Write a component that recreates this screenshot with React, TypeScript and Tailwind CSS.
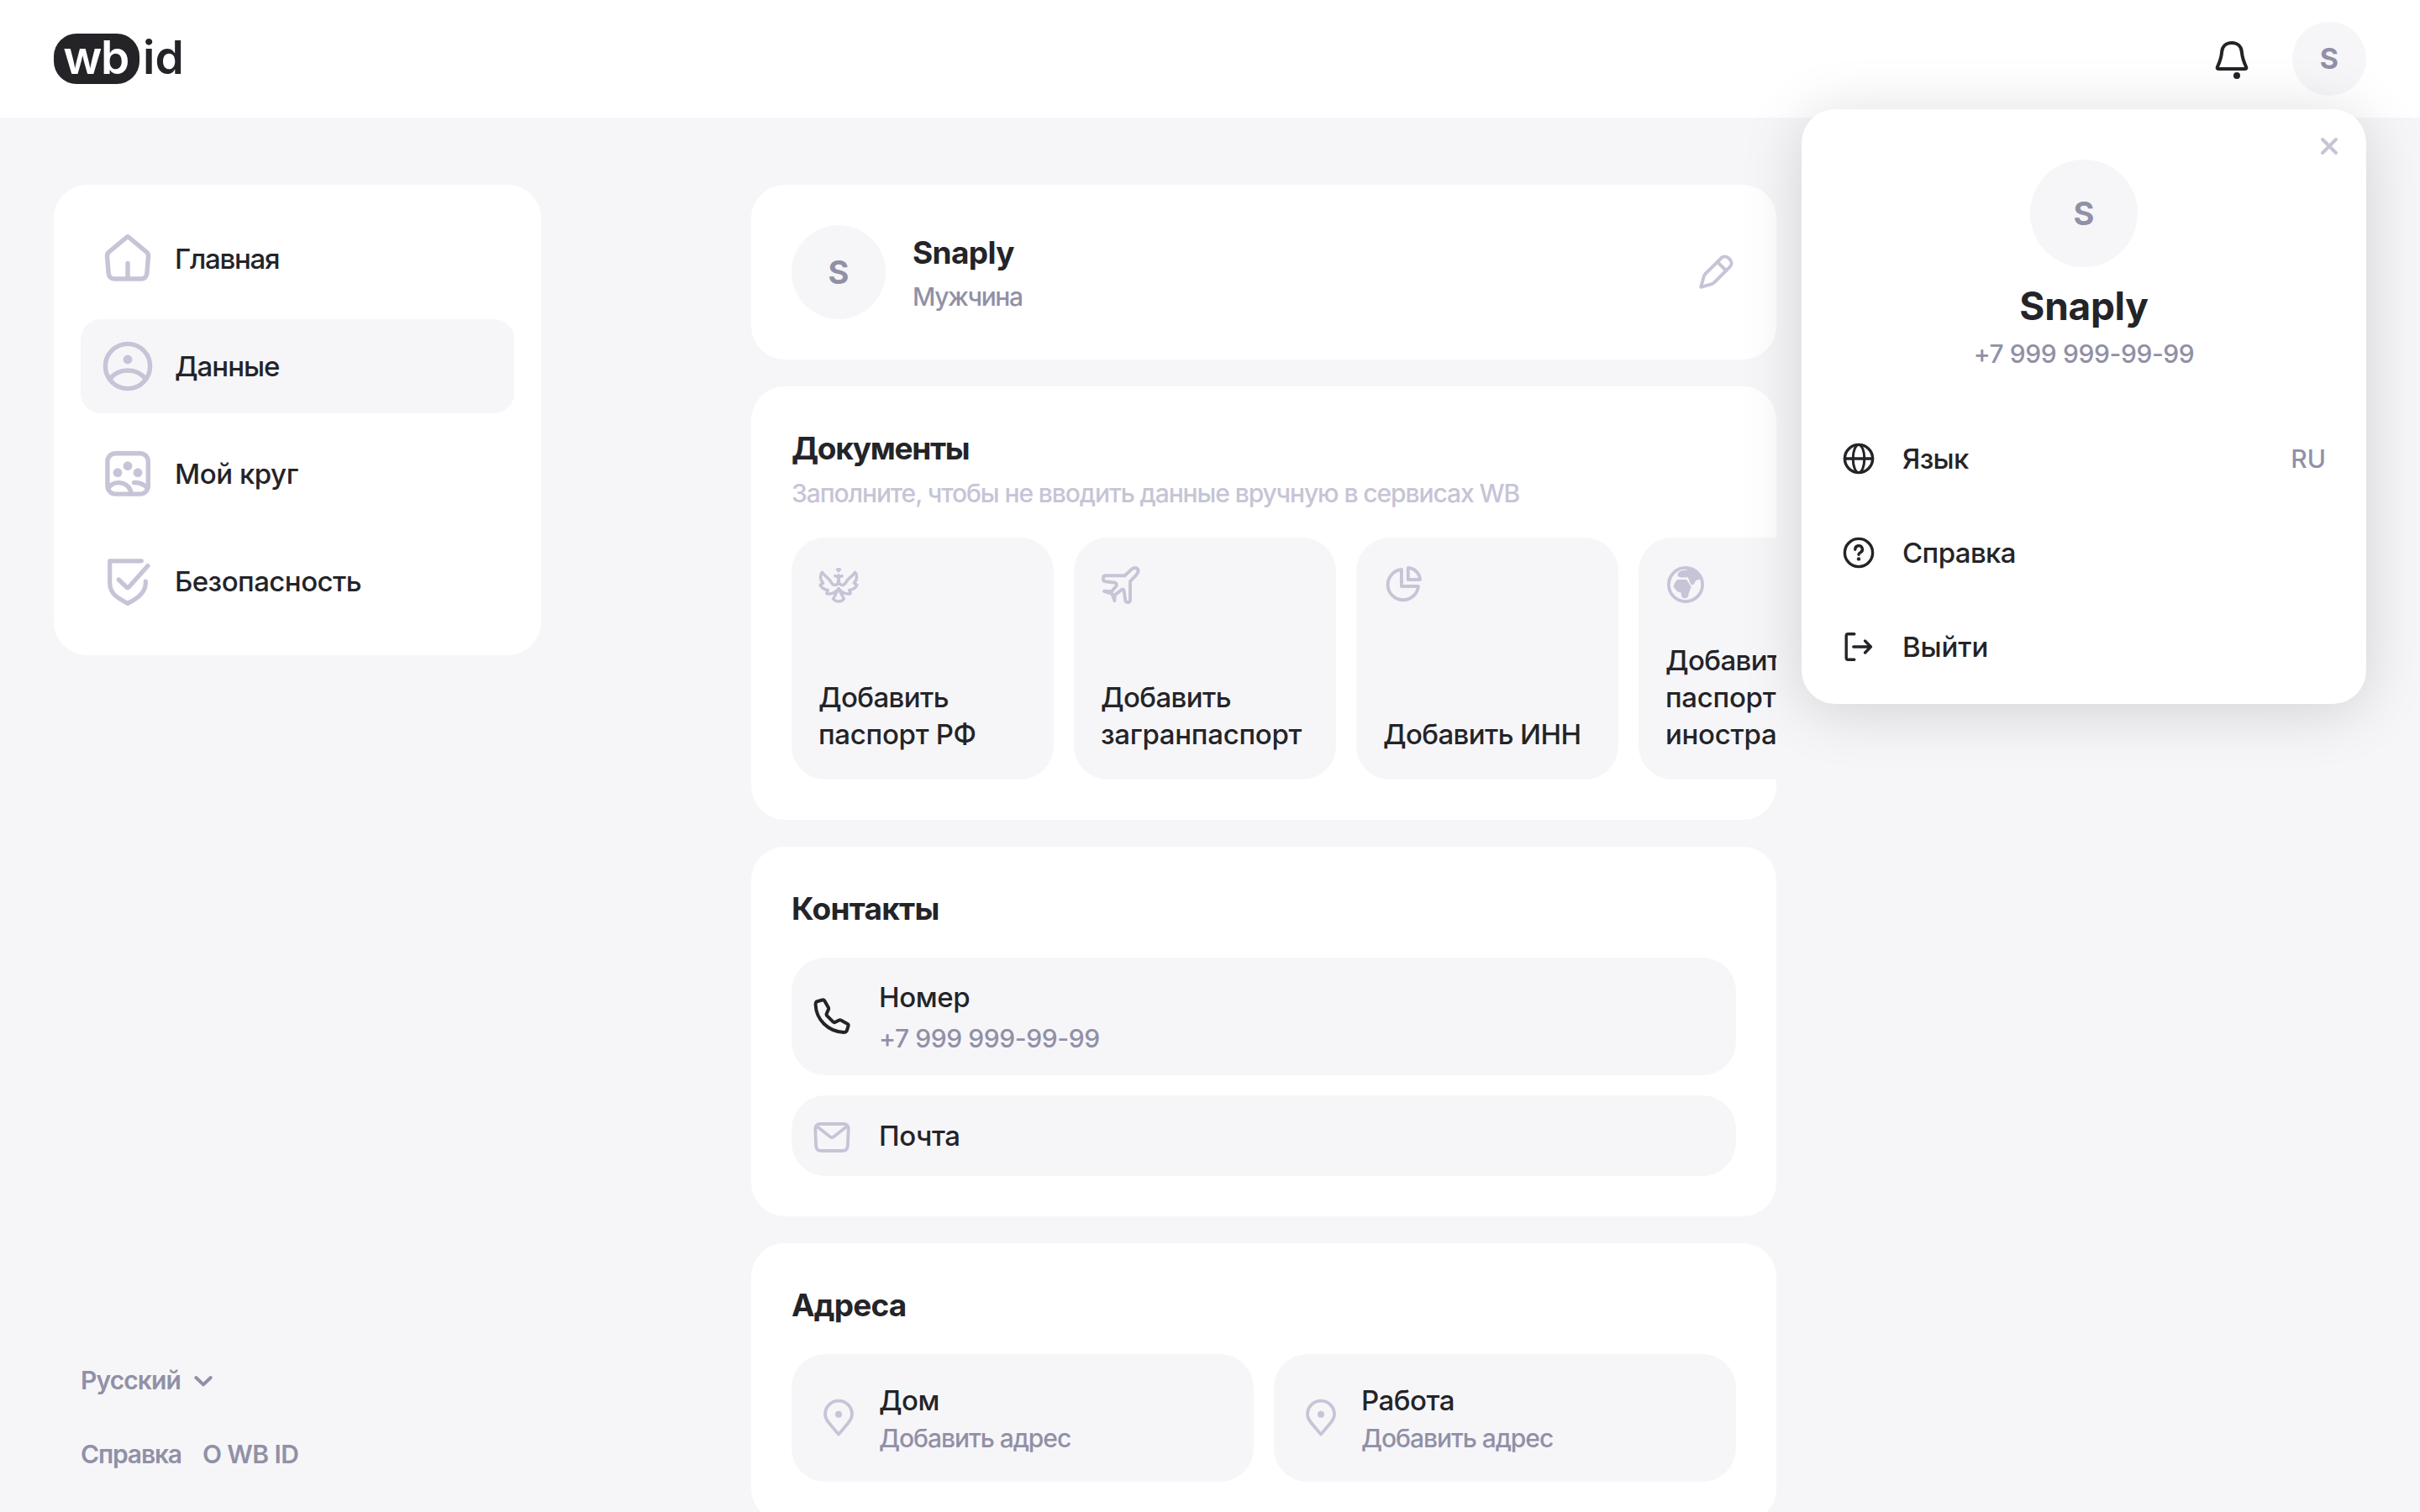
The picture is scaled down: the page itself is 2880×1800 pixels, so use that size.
import type { ReactNode } from 'react'
import clsx from 'clsx'

const PHONE = '+7 999 999-99-99'

interface IconProps {
  className?: string
}

function Icon({ box, width, className, children }: { box: number; width: number; className?: string; children: ReactNode }) {
  return (
    <svg
      viewBox={`0 0 ${box} ${box}`}
      fill="none"
      stroke="currentColor"
      strokeWidth={width}
      strokeLinecap="round"
      strokeLinejoin="round"
      className={clsx('shrink-0', className)}
    >
      {children}
    </svg>
  )
}

const Dot = ({ x, y, r }: { x: number; y: number; r: number }) => <circle cx={x} cy={y} r={r} fill="currentColor" stroke="none" />

const HomeIcon = ({ className }: IconProps) => (
  <Icon box={64} width={5.4} className={className}>
    <path d="M30.4 6.7Q32 5.2 33.6 6.7L54.6 24.3Q56.7 26.2 56.5 29L54.9 49Q54.2 56 47.5 56H16.5Q9.8 56 9.1 49L7.5 29Q7.3 26.2 9.4 24.3Z" />
    <path d="M32 37.4V55" />
  </Icon>
)

const UserIcon = ({ className }: IconProps) => (
  <Icon box={64} width={5.4} className={className}>
    <circle cx="32" cy="32" r="26.6" />
    <path d="M10.5 47.5C15.5 41 23.5 37 32 37S48.5 41 53.5 47.5" />
    <Dot x={32} y={24} r={5.4} />
  </Icon>
)

const CircleIcon = ({ className }: IconProps) => (
  <Icon box={64} width={5.4} className={className}>
    <rect x="7.9" y="7.7" width="48.4" height="48.4" rx="9.5" />
    <path d="M8.8 49C12 44.8 16.2 42.6 21 42.6C29 42.6 35.7 48.2 36.2 56" />
    <path d="M39.6 42.6C46 42.2 51.2 44.6 55.6 49" />
    <Dot x={32} y={22.7} r={5.4} />
    <Dot x={20} y={30.7} r={5.4} />
    <Dot x={44} y={30.7} r={5.4} />
  </Icon>
)

const ShieldIcon = ({ className }: IconProps) => (
  <Icon box={64} width={5.2} className={className}>
    <path d="M48.3 7.8H10.7V34C10.7 47 20 52 32 58.4C44 52 53.3 45.5 53.3 34V32" />
    <path d="M21.2 30L31 39.4Q32 40.2 33 39.2L56 13.6" />
  </Icon>
)

const BellIcon = ({ className }: IconProps) => (
  <Icon box={48} width={4} className={className}>
    <path d="M24 5C17 5 12.6 9.5 12.1 16C11.6 23 10 27 6.8 34Q6.2 36 8 36H40Q41.8 36 41.2 34C38 27 36.4 23 35.9 16C35.4 9.5 31 5 24 5Z" />
    <Dot x={30} y={44} r={4} />
  </Icon>
)

const PencilIcon = ({ className }: IconProps) => (
  <Icon box={48} width={3.9} className={className}>
    <path d="M6.2 41.8L9.8 29Q10.3 27.3 11.5 26L30.7 7C33.2 4.6 37 5 40 8S43.4 14.8 41 17.3L22 36.3Q20.8 37.6 19 38.2Z" />
    <path d="M26 12L36 22" />
  </Icon>
)

const EagleIcon = ({ className }: IconProps) => (
  <Icon box={48} width={3.5} className={className}>
    <path d="M24 12.8V18C24 22 22.5 24.5 19.5 24.5C16 24.5 15.6 22 14.5 20C12 16 7 13.5 4.5 9.3C1.6 12.5 1.6 18 5.6 22L2.2 24.5C4 28.4 7.5 30 11.2 30.4L9.8 34.5C15 36 21 33.5 24 28.8" />
    <path d="M24 18C24 22 25.5 24.5 28.5 24.5C32 24.5 32.4 22 33.5 20C36 16 41 13.5 43.5 9.3C46.4 12.5 46.4 18 42.4 22L45.8 24.5C44 28.4 40.5 30 36.8 30.4L38.2 34.5C33 36 27 33.5 24 28.8" />
    <path d="M24 28.8L17.6 41C20.6 45 27.4 45 30.4 41Z" />
    <path d="M19.8 13.6L24 15.2L28.2 13.6" />
    <path d="M24 8.2L22 6Q23 4.8 24 5.8Q25 4.8 26 6Z" strokeWidth="2.6" />
  </Icon>
)

const PlaneIcon = ({ className }: IconProps) => (
  <Icon box={48} width={3.9} className={className}>
    <path d="M28.6 13.2L37 5.4C41 2.3 45.8 4.6 44.2 9.4C43 12.6 38.4 16.4 35 20V42.4Q34.8 45 32.2 45Q29.4 45 29.1 42L27.6 31Q26.8 28.6 24.6 30.2L16.8 36.4L16.4 43.2L13.6 35L4 31.8L12.8 32.2L18.6 25.4Q19.6 22 16 21.5L5.4 20.2Q3 19.8 3 17.4V15.8Q3 13.2 5.8 13.2Z" />
  </Icon>
)

const PieIcon = ({ className }: IconProps) => (
  <Icon box={48} width={3.9} className={className}>
    <path d="M21.9 6A18.2 18.2 0 1 0 41.9 26H21.9Z" />
    <path d="M29.8 4A15 15 0 0 1 44 18H29.8Z" />
  </Icon>
)

const EarthIcon = ({ className }: IconProps) => (
  <Icon box={48} width={3.8} className={className}>
    <circle cx="24" cy="24" r="20.1" />
    <path
      d="M25 4L26 6.6C22 7 17 7.5 15.6 9.6Q13.4 12.4 15.6 14.4Q17 15.6 20 15.5L26.6 15.3C28.6 18 28.6 22.5 31 24Q34 25 35.6 20Q38 17 43.4 17.5A20 20 0 0 0 25 4Z"
      fill="currentColor"
      stroke="none"
    />
    <path
      d="M14 18H25Q26.4 20 28 22.4Q30 25 30.8 27C28.6 30.5 28.2 34 27 38Q25.6 40.6 22.6 40.2Q18.8 39.6 18.8 36V33.4Q15.4 33.6 13.6 31.6L9.4 26.6Q10.4 21.6 14 18Z"
      fill="currentColor"
      stroke="none"
    />
  </Icon>
)

const PhoneIcon = ({ className }: IconProps) => (
  <Icon box={48} width={4} className={className}>
    <path d="M12.6 4.5L6.4 6.2C4.8 6.8 4.6 8 4.6 10C5.2 28 20 42.4 38 42.9C40.2 42.9 41.3 42.5 41.9 40.6L43.7 34.9Q44 33.7 42.7 32.9L34.7 28.6Q33.6 28 32.5 28.6L27.6 31Q26.5 31.4 25.6 30.6L17.9 22.9Q17.2 22 17.6 21L20 15.6Q20.4 14.5 19.9 13.5L15.3 5.4Q14.3 4 12.6 4.5Z" />
  </Icon>
)

const MailIcon = ({ className }: IconProps) => (
  <Icon box={48} width={3.8} className={className}>
    <path d="M10.4 10H37.6Q43.8 10 43.7 16.2L42.9 35.8Q42.5 42 36.6 42H11.4Q5.5 42 5.1 35.8L4.3 16.2Q4.2 10 10.4 10Z" />
    <path d="M5.6 12.6L22.2 25.4Q24 26.8 25.8 25.4L42.4 12.6" />
  </Icon>
)

const PinIcon = ({ className }: IconProps) => (
  <Icon box={48} width={3.8} className={className}>
    <path d="M24 43.6L13.4 31C10 27 8 24 8 19.7A16 16 0 0 1 40 19.7C40 24 38 27 34.6 31Z" />
    <Dot x={24} y={19.8} r={4} />
  </Icon>
)

const GlobeIcon = ({ className }: IconProps) => (
  <Icon box={40} width={3.4} className={className}>
    <circle cx="20" cy="20" r="16.6" />
    <ellipse cx="20" cy="20" rx="6.8" ry="16.6" strokeWidth="3" />
    <path d="M3.4 20H36.6" />
  </Icon>
)

const HelpIcon = ({ className }: IconProps) => (
  <Icon box={40} width={3.4} className={className}>
    <circle cx="20" cy="20" r="16.6" />
    <path d="M15.8 16.2A4.3 4.3 0 1 1 22 19.8Q20 20.8 20 22.2" />
    <Dot x={20} y={27.4} r={2.2} />
  </Icon>
)

const ExitIcon = ({ className }: IconProps) => (
  <Icon box={40} width={3.4} className={className}>
    <path d="M14.8 4.8H7.2Q5.2 4.8 5.2 6.8V33.2Q5.2 35.2 7.2 35.2H14.8" />
    <path d="M13.8 20H34M27.6 13L34.4 20L27.6 27" />
  </Icon>
)

function Avatar({ className }: IconProps) {
  return (
    <div className={clsx('flex shrink-0 items-center justify-center rounded-full bg-[#f6f6f9] font-bold text-[#9190a6]', className)}>
      S
    </div>
  )
}

function Card({ title, tracking, children }: { title: string; tracking: string; children: ReactNode }) {
  return (
    <section className="shrink-0 overflow-hidden rounded-[40px] bg-white p-12">
      <h2 className={clsx('text-[37px] leading-[52px] font-bold', tracking)}>{title}</h2>
      {children}
    </section>
  )
}

const navItems = [
  { label: 'Главная', icon: HomeIcon, tracking: 'tracking-[-1.25px]' },
  { label: 'Данные', icon: UserIcon, active: true, tracking: 'tracking-[-1px]' },
  { label: 'Мой круг', icon: CircleIcon, tracking: 'tracking-[-0.45px]' },
  { label: 'Безопасность', icon: ShieldIcon, tracking: 'tracking-[-0.55px]' },
]

const documents = [
  { label: ['Добавить', 'паспорт РФ'], icon: EagleIcon },
  { label: ['Добавить', 'загранпаспорт'], icon: PlaneIcon },
  { label: ['Добавить ИНН'], icon: PieIcon },
  { label: ['Добавить', 'паспорт', 'иностранца'], icon: EarthIcon },
]

const menuItems = [
  { label: 'Язык', icon: GlobeIcon, value: 'RU', tracking: 'tracking-[-0.7px]' },
  { label: 'Справка', icon: HelpIcon, tracking: 'tracking-[-0.6px]' },
  { label: 'Выйти', icon: ExitIcon, tracking: 'tracking-[-0.1px]' },
]

function Header() {
  return (
    <header className="flex h-[140px] shrink-0 items-center justify-between bg-white px-16">
      <div className="flex items-center text-[55px] leading-[60px] font-semibold">
        <div className="flex h-[60px] w-[102px] items-center justify-center rounded-[27px] bg-[#242428] pr-0.5 pb-[5px] tracking-[-1.6px] text-white">
          wb
        </div>
        <span className="pb-[5px] pl-1 tracking-[0.2px]">id</span>
      </div>
      <div className="flex items-center gap-12">
        <BellIcon className="size-12" />
        <Avatar className="size-22 text-[34px]" />
      </div>
    </header>
  )
}

function Sidebar() {
  return (
    <aside className="flex w-[580px] shrink-0 flex-col justify-between">
      <nav className="flex flex-col gap-4 rounded-[40px] bg-white p-8">
        {navItems.map(({ label, icon: ItemIcon, active, tracking }) => (
          <a key={label} className={clsx('flex h-28 items-center gap-6 rounded-3xl px-6', active && 'bg-[#f6f6f9]')}>
            <ItemIcon className="size-16 text-[#c6c4d6]" />
            <span className={tracking}>{label}</span>
          </a>
        ))}
      </nav>
      <footer className="flex flex-col gap-12 px-8 pb-[49px] text-[30px] leading-10 font-semibold text-[#9190a6]">
        <div className="flex items-center gap-[11px]">
          <span className="tracking-[-0.9px]">Русский</span>
          <Icon box={32} width={4} className="size-8">
            <path d="M7.3 13L16 21.4L24.7 13" />
          </Icon>
        </div>
        <div className="flex gap-[25px]">
          <span className="tracking-[-1.15px]">Справка</span>
          <span className="tracking-[-0.6px]">О WB ID</span>
        </div>
      </footer>
    </aside>
  )
}

function ProfileMenu() {
  return (
    <div className="absolute top-[130px] right-16 flex h-[708px] w-[672px] flex-col rounded-[40px] bg-white px-12 pt-[60px] shadow-[0_8px_72px_rgba(0,0,0,0.15)]">
      <Icon box={32} width={4} className="absolute top-7 right-7 size-8 text-[#c6c4d6]">
        <path d="M8 8L24 24M24 8L8 24" />
      </Icon>
      <div className="flex flex-col items-center">
        <Avatar className="size-32 text-[38px]" />
        <h1 className="mt-4 text-[46px] leading-[60px] font-bold tracking-[-0.3px]">Snaply</h1>
        <p className="mt-[7px] text-[30px] leading-10 tracking-[-0.4px] text-[#9190a6]">{PHONE}</p>
      </div>
      <ul className="mt-[49px]">
        {menuItems.map(({ label, icon: ItemIcon, value, tracking }) => (
          <li key={label} className="flex h-28 items-center gap-8">
            <ItemIcon className="size-10" />
            <span className={tracking}>{label}</span>
            {value && <span className="ml-auto text-[30px] leading-10 text-[#9190a6]">{value}</span>}
          </li>
        ))}
      </ul>
    </div>
  )
}

export default function App() {
  return (
    <div className="relative flex h-screen flex-col overflow-hidden bg-[#f6f6f9] font-['Inter',sans-serif] text-[33px] leading-[44px] font-medium text-[#242428]">
      <Header />
      <div className="flex min-h-0 flex-1 gap-[250px] px-16 pt-20">
        <Sidebar />
        <main className="flex w-[1220px] flex-col gap-8">
          <section className="flex h-52 shrink-0 items-center gap-8 rounded-[40px] bg-white px-12">
            <Avatar className="size-28 text-[38px]" />
            <div className="flex flex-1 flex-col gap-2 pt-0.5">
              <h2 className="text-[37px] leading-[48px] font-bold tracking-[-0.65px]">Snaply</h2>
              <p className="text-[30px] leading-10 tracking-[-1.4px] text-[#9190a6]">Мужчина</p>
            </div>
            <PencilIcon className="size-12 text-[#c6c4d6]" />
          </section>

          <Card title="Документы" tracking="tracking-[-1.3px]">
            <p className="mt-[7px] text-[30px] leading-10 tracking-[-1.09px] whitespace-nowrap text-[#c6c4d6]">
              Заполните, чтобы не вводить данные вручную в сервисах WB
            </p>
            <div className="mt-[33px] flex gap-6">
              {documents.map(({ label, icon: DocIcon }) => (
                <div key={label.join(' ')} className="flex h-72 w-[312px] shrink-0 flex-col justify-between rounded-[40px] bg-[#f6f6f9] p-8">
                  <DocIcon className="size-12 text-[#c6c4d6]" />
                  <div className="whitespace-nowrap">
                    {label.map((line) => (
                      <div key={line} className={line.startsWith('Добавить') ? 'tracking-[-0.6px]' : 'tracking-[-0.3px]'}>
                        {line}
                      </div>
                    ))}
                  </div>
                </div>
              ))}
            </div>
          </Card>

          <Card title="Контакты" tracking="tracking-[-0.7px]">
            <div className="mt-8 flex flex-col gap-6 tracking-[-0.4px]">
              <div className="flex h-[140px] items-center gap-8 rounded-[40px] bg-[#f6f6f9] px-6">
                <PhoneIcon className="size-12" />
                <div className="flex flex-col gap-[7px]">
                  <span>Номер</span>
                  <span className="text-[30px] leading-10 text-[#9190a6]">{PHONE}</span>
                </div>
              </div>
              <div className="flex h-24 items-center gap-8 rounded-[40px] bg-[#f6f6f9] px-6">
                <MailIcon className="size-12 text-[#c6c4d6]" />
                <span>Почта</span>
              </div>
            </div>
          </Card>

          <Card title="Адреса" tracking="tracking-[-0.8px]">
            <div className="mt-8 grid grid-cols-2 gap-6">
              {['Дом', 'Работа'].map((label) => (
                <div key={label} className="flex h-38 items-center gap-6 rounded-[40px] bg-[#f6f6f9] px-8">
                  <PinIcon className="size-12 text-[#c6c4d6]" />
                  <div className="flex flex-col gap-[3px]">
                    <span className="tracking-[-0.5px]">{label}</span>
                    <span className="text-[30px] leading-10 tracking-[-1.05px] text-[#9190a6]">Добавить адрес</span>
                  </div>
                </div>
              ))}
            </div>
          </Card>
        </main>
      </div>
      <ProfileMenu />
    </div>
  )
}
